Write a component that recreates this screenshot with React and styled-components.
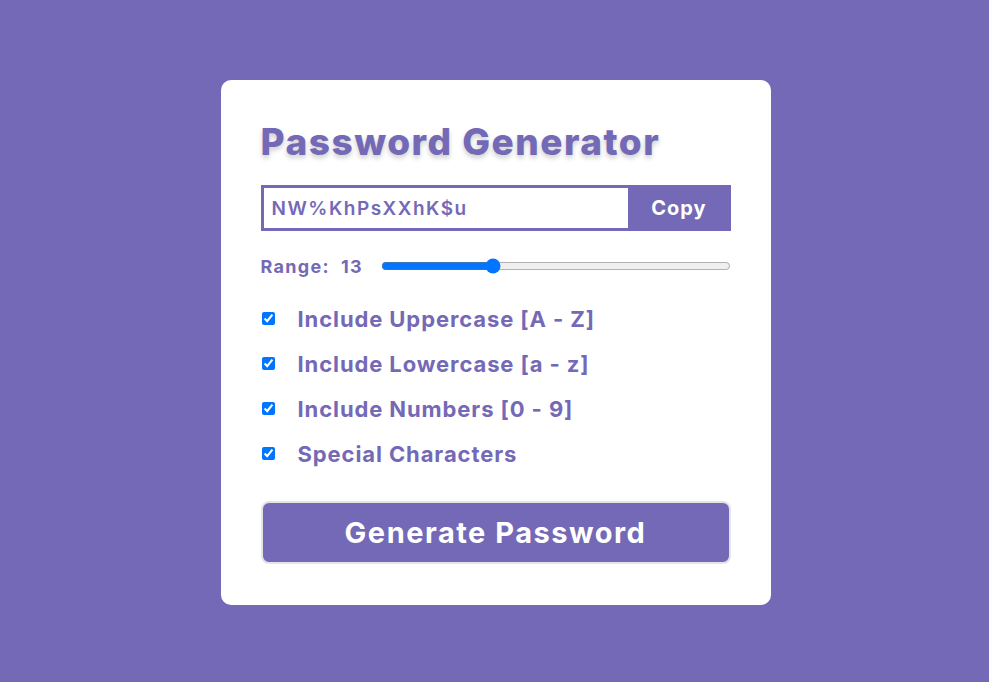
import React, { useState } from "react";
import styled, { createGlobalStyle } from "styled-components";

const GlobalStyle = createGlobalStyle`
  html, body {
    margin: 0;
    padding: 0;
    background: #7469b6;
    font-family: "Inter", "Noto Sans", sans-serif;
  }
`;

const Page = styled.div`
  width: 100%;
  min-height: 682px;
  display: flex;
  justify-content: center;
  align-items: flex-start;
  padding: 80px 0 0 2px;
  box-sizing: border-box;
`;

const Card = styled.div`
  width: 550px;
  background: #fff;
  border-radius: 10px;
  padding: 40px 40px 41px;
  box-sizing: border-box;
  color: #7469b6;
`;

const Title = styled.h1`
  margin: 0 0 21px;
  font-size: 37px;
  font-weight: 800;
  line-height: 44px;
  letter-spacing: 1.5px;
  text-shadow: 0 3px 5px rgba(0, 0, 0, 0.2);
`;

const InputRow = styled.div`
  display: flex;
  height: 46px;
`;

const PassInput = styled.input`
  flex: 1;
  min-width: 0;
  border: 3px solid #7469b6;
  border-right: none;
  outline: none;
  padding: 0 8px;
  font-family: inherit;
  font-size: 19px;
  font-weight: 600;
  letter-spacing: 1.5px;
  color: #7469b6;
`;

const CopyButton = styled.button`
  width: 103px;
  border: none;
  background: #7469b6;
  color: #fff;
  font-family: inherit;
  font-size: 20px;
  font-weight: 700;
  letter-spacing: 1px;
  cursor: pointer;
`;

const RangeRow = styled.div`
  display: flex;
  align-items: center;
  margin-top: 24px;
  height: 22px;
`;

const RangeLabel = styled.span`
  width: 118px;
  font-size: 18px;
  font-weight: 700;
  letter-spacing: 1.3px;
  white-space: pre;
`;

const Slider = styled.input`
  flex: 1;
  margin: 0 0 0 2px;
`;

const Options = styled.div`
  display: flex;
  flex-direction: column;
  gap: 18px;
  margin-top: 28px;
`;

const Option = styled.label`
  display: flex;
  align-items: center;
  height: 27px;
  font-size: 22px;
  font-weight: 700;
  letter-spacing: 0.9px;
  cursor: pointer;

  input {
    width: 13px;
    height: 13px;
    margin: 0 23px 0 1px;
  }
`;

const GenerateButton = styled.button`
  display: block;
  width: 100%;
  height: 63px;
  margin-top: 34px;
  background: #7469b6;
  color: #fff;
  border: 2px solid #e3e3e8;
  border-radius: 8px;
  font-family: inherit;
  font-size: 29px;
  font-weight: 700;
  letter-spacing: 1.5px;
  cursor: pointer;
`;

const options = [
  "Include Uppercase [A - Z]",
  "Include Lowercase [a - z]",
  "Include Numbers [0 - 9]",
  "Special Characters",
];

export default function App() {
  const [length, setLength] = useState(13);
  return (
    <>
      <GlobalStyle />
      <Page>
        <Card>
          <Title>Password Generator</Title>
          <InputRow>
            <PassInput readOnly value="NW%KhPsXXhK$u" />
            <CopyButton>Copy</CopyButton>
          </InputRow>
          <RangeRow>
            <RangeLabel>{`Range:  ${length}`}</RangeLabel>
            <Slider
              type="range"
              min="8"
              max="24"
              value={length}
              onChange={(e) => setLength(e.target.value)}
            />
          </RangeRow>
          <Options>
            {options.map((o) => (
              <Option key={o}>
                <input type="checkbox" defaultChecked />
                {o}
              </Option>
            ))}
          </Options>
          <GenerateButton>Generate Password</GenerateButton>
        </Card>
      </Page>
    </>
  );
}
